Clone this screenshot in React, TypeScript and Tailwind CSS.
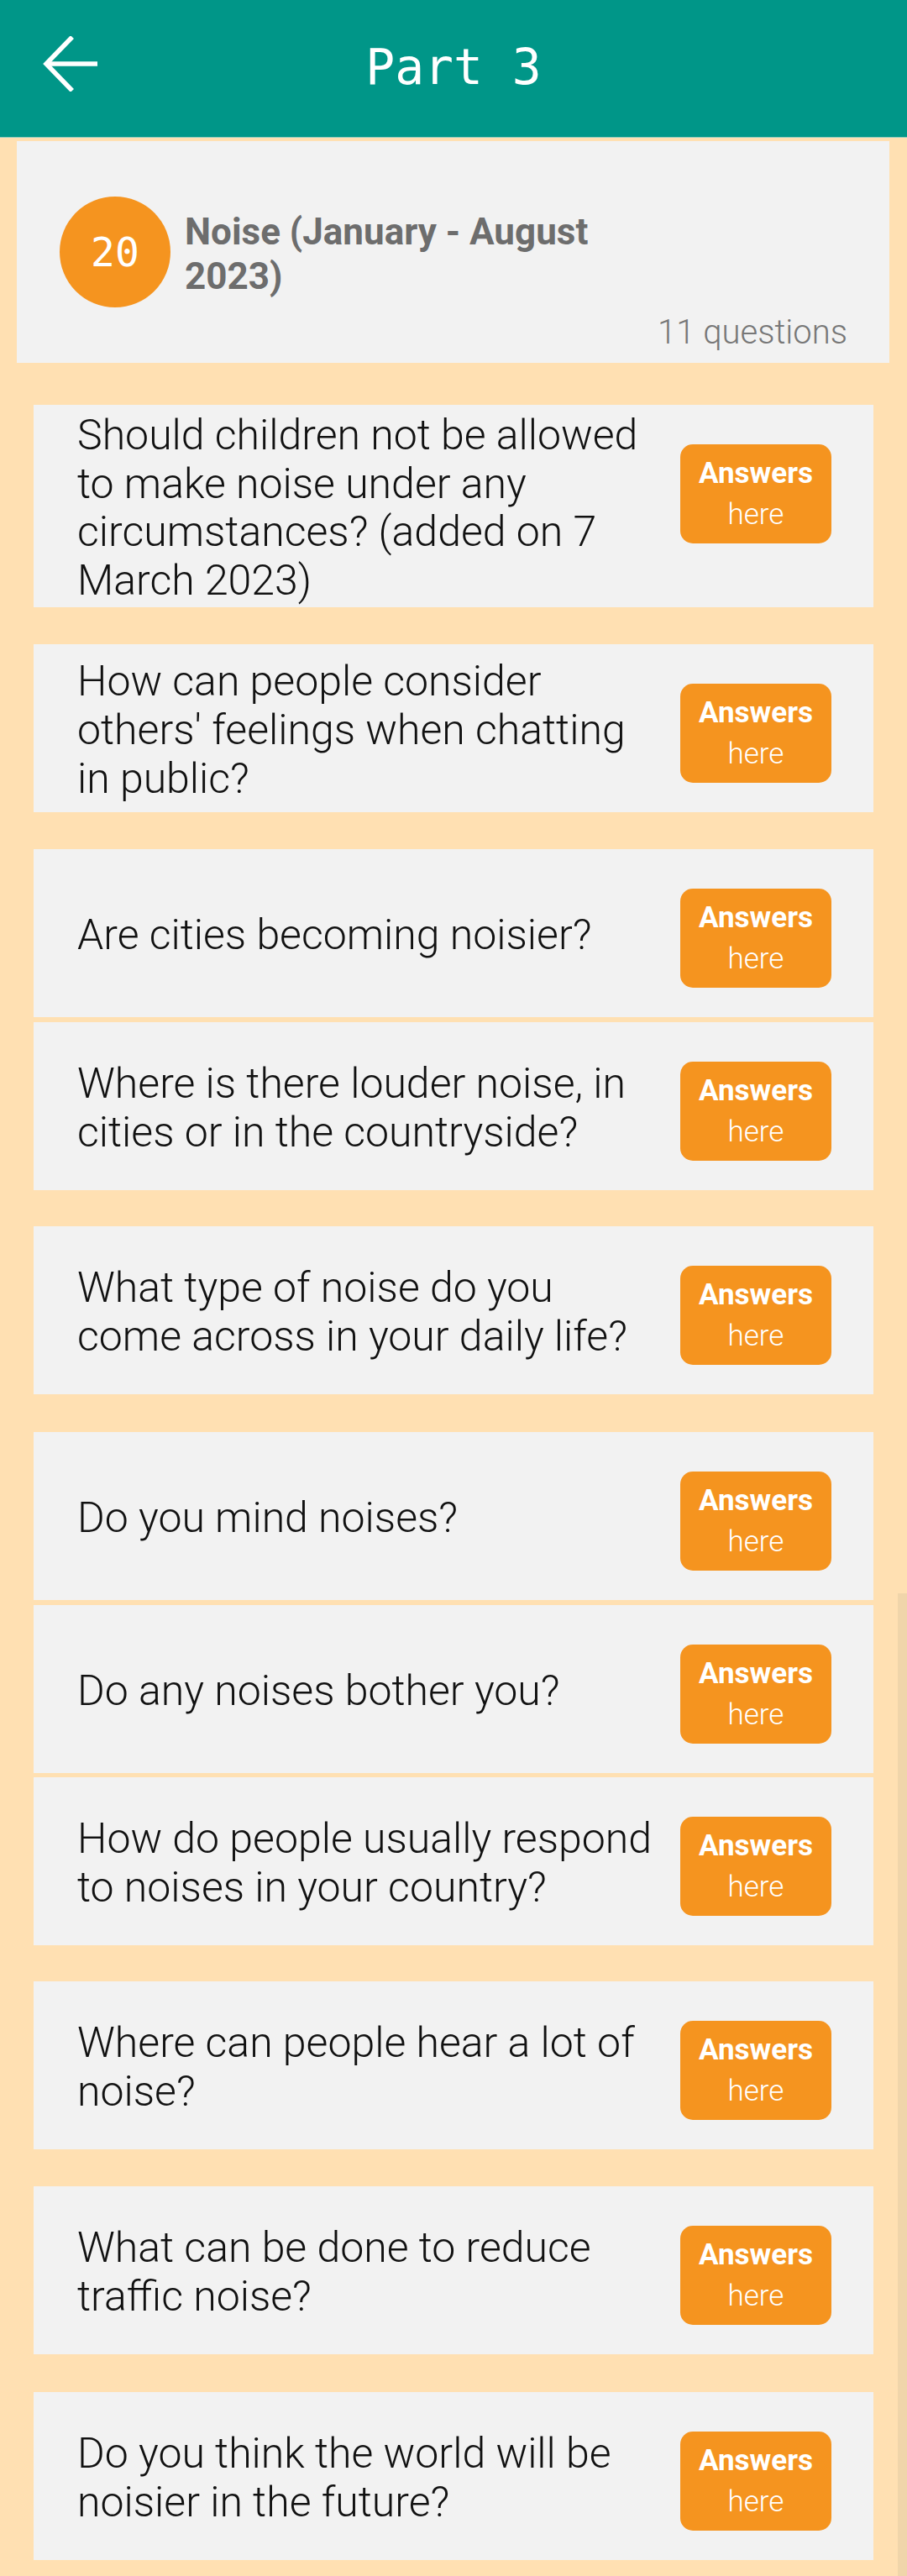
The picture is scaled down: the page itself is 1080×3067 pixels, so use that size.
const questions = [
  { text: 'Should children not be allowed to make noise under any circumstances? (added on 7 March 2023)', gap: 'mt-[50px]' },
  { text: "How can people consider others' feelings when chatting in public?", gap: 'mt-[44px]' },
  { text: 'Are cities becoming noisier?', gap: 'mt-[44px]' },
  { text: 'Where is there louder noise, in cities or in the countryside?', gap: 'mt-[6px]' },
  { text: 'What type of noise do you come across in your daily life?', gap: 'mt-[43px]' },
  { text: 'Do you mind noises?', gap: 'mt-[45px]' },
  { text: 'Do any noises bother you?', gap: 'mt-[6px]' },
  { text: 'How do people usually respond to noises in your country?', gap: 'mt-[5px]' },
  { text: 'Where can people hear a lot of noise?', gap: 'mt-[43px]' },
  { text: 'What can be done to reduce traffic noise?', gap: 'mt-[44px]' },
  { text: 'Do you think the world will be noisier in the future?', gap: 'mt-[45px]' },
]

function Header() {
  return (
    <header className="relative flex h-[163px] items-center justify-center bg-[#009688] shadow-[0_1px_0_#8fcbbf]">
      <button className="absolute left-[50px] top-[43px] h-[66px] w-[66px]">
        <svg viewBox="0 0 66 66" fill="none" stroke="white" strokeWidth="5.5" strokeLinecap="butt" className="h-full w-full">
          <path d="M66 33H5" />
          <path d="M36 1L5 33l31 32" />
        </svg>
      </button>
      <h1 className="-mt-[4px] font-['DejaVu_Sans_Mono',monospace] text-[58px] leading-none text-white">Part 3</h1>
    </header>
  )
}

function TopicCard() {
  return (
    <div className="ml-[20px] mr-[21px] mt-[5px] flex flex-col bg-[#f2f2f2] pb-[12px] pt-[66px]">
      <div className="flex items-center">
        <div className="ml-[51px] flex h-[132px] w-[132px] shrink-0 items-center justify-center rounded-full bg-[#f5941f]">
          <span className="font-['DejaVu_Sans_Mono',monospace] text-[48px] leading-none text-white">20</span>
        </div>
        <p className="ml-[17px] mt-[6px] w-[560px] font-['Roboto',sans-serif] text-[44px] font-bold leading-[53px] text-[#6d6d6d]">
          Noise (January - August 2023)
        </p>
      </div>
      <p className="mr-[50px] mt-[6px] text-right font-['Roboto',sans-serif] text-[40px] font-light leading-[48px] text-[#777777]">
        11 questions
      </p>
    </div>
  )
}

function QuestionCard({ text, gap }: { text: string; gap: string }) {
  return (
    <div className={`${gap} flex min-h-[200px] items-start bg-[#f2f2f2]`}>
      <p className="flex-1 self-center pb-[2px] pl-[52px] pr-[30px] pt-[8px] font-['Roboto',sans-serif] text-[50px] font-light leading-[57.7px] text-[#111111]">
        {text}
      </p>
      <button className="mr-[50px] mt-[47px] flex h-[118px] w-[180px] shrink-0 flex-col items-center justify-center rounded-[15px] bg-[#f5941f] font-['Roboto',sans-serif] text-white">
        <span className="text-[35px] font-bold leading-[49px]">Answers</span>
        <span className="text-[35px] font-light leading-[49px]">here</span>
      </button>
    </div>
  )
}

export default function App() {
  return (
    <div className="relative min-h-[3067px] w-[1080px] bg-[#ffe0b2]">
      <Header />
      <TopicCard />
      <div className="mx-[40px] flex flex-col">
        {questions.map((q) => (
          <QuestionCard key={q.text} text={q.text} gap={q.gap} />
        ))}
      </div>
      <div className="absolute right-0 top-[1897px] h-[1170px] w-[11px] bg-[#f0d5aa]" />
    </div>
  )
}
